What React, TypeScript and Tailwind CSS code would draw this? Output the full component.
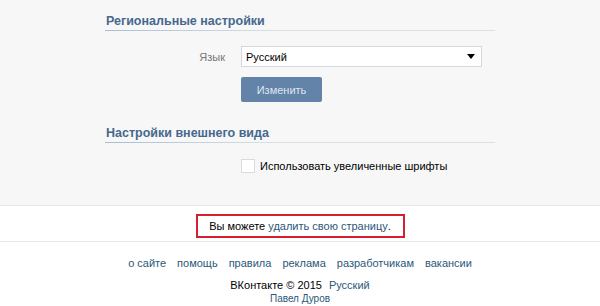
export default function App() {
  const font = { fontFamily: '"Liberation Sans", Tahoma, Arial, sans-serif' };
  return (
    <div className="w-[600px] h-[306px] bg-white text-[11px] leading-[14px] text-black overflow-hidden" style={font}>
      {/* Settings panel */}
      <div className="bg-[#f7f7f7] h-[205px] pt-[12px]">
        <div className="w-[390px] mx-auto">
          <SectionTitle title="Региональные настройки" />
          <div className="flex items-center mt-[14px]">
            <div className="w-[120px] text-right text-[#777]">Язык</div>
            <div className="ml-[16px] w-[241px] h-[21px] bg-white border border-[#d5d9de] flex items-center justify-between pl-[4px] pr-[6px]">
              <span>Русский</span>
              <span className="w-0 h-0 border-l-[4px] border-r-[4px] border-t-[5px] border-l-transparent border-r-transparent border-t-black" />
            </div>
          </div>
          <div className="ml-[136px] mt-[10px] w-[81px] h-[25px] rounded-[2px] bg-[#6383a8] text-[#dfe6ee] flex items-center justify-center">
            Изменить
          </div>

          <div className="mt-[22px]">
            <SectionTitle title="Настройки внешнего вида" />
          </div>
          <div className="flex items-center ml-[136px] mt-[15px]">
            <span className="w-[14px] h-[14px] bg-white border border-[#d8dce1]" />
            <span className="ml-[5px]">Использовать увеличенные шрифты</span>
          </div>
        </div>
      </div>

      {/* Delete page notice */}
      <div className="border-t border-b border-[#e7e8ec] pt-[8px] pb-[3px] flex justify-center">
        <div className="w-[209px] h-[24px] border-2 border-[#d6202f] flex items-center justify-center whitespace-nowrap">
          <span>Вы можете&nbsp;</span>
          <span className="text-[#2b587a]">удалить свою страницу</span>
          <span>.</span>
        </div>
      </div>

      {/* Footer */}
      <div className="flex justify-center gap-[11px] mt-[14px] text-[#2b587a] whitespace-nowrap">
        <span>о сайте</span>
        <span>помощь</span>
        <span>правила</span>
        <span>реклама</span>
        <span>разработчикам</span>
        <span>вакансии</span>
      </div>
      <div className="flex justify-center mt-[8px] whitespace-nowrap">
        <span>ВКонтакте © 2015</span>
        <span className="ml-[7px] text-[#2b587a]">Русский</span>
      </div>
      <div className="flex justify-center text-[10px] leading-[12px] text-[#2b587a] mt-[1px]">Павел Дуров</div>
    </div>
  );
}

function SectionTitle({ title }: { title: string }) {
  return (
    <div className="pb-[1px] leading-[18px]">
      <div className="text-[12.5px] font-bold text-[#45688e] pl-[1px]">{title}</div>
      <div className="h-px bg-[linear-gradient(to_right,#a9bdd2,#dae1e8_45%,#dae1e8)]" />
    </div>
  );
}
